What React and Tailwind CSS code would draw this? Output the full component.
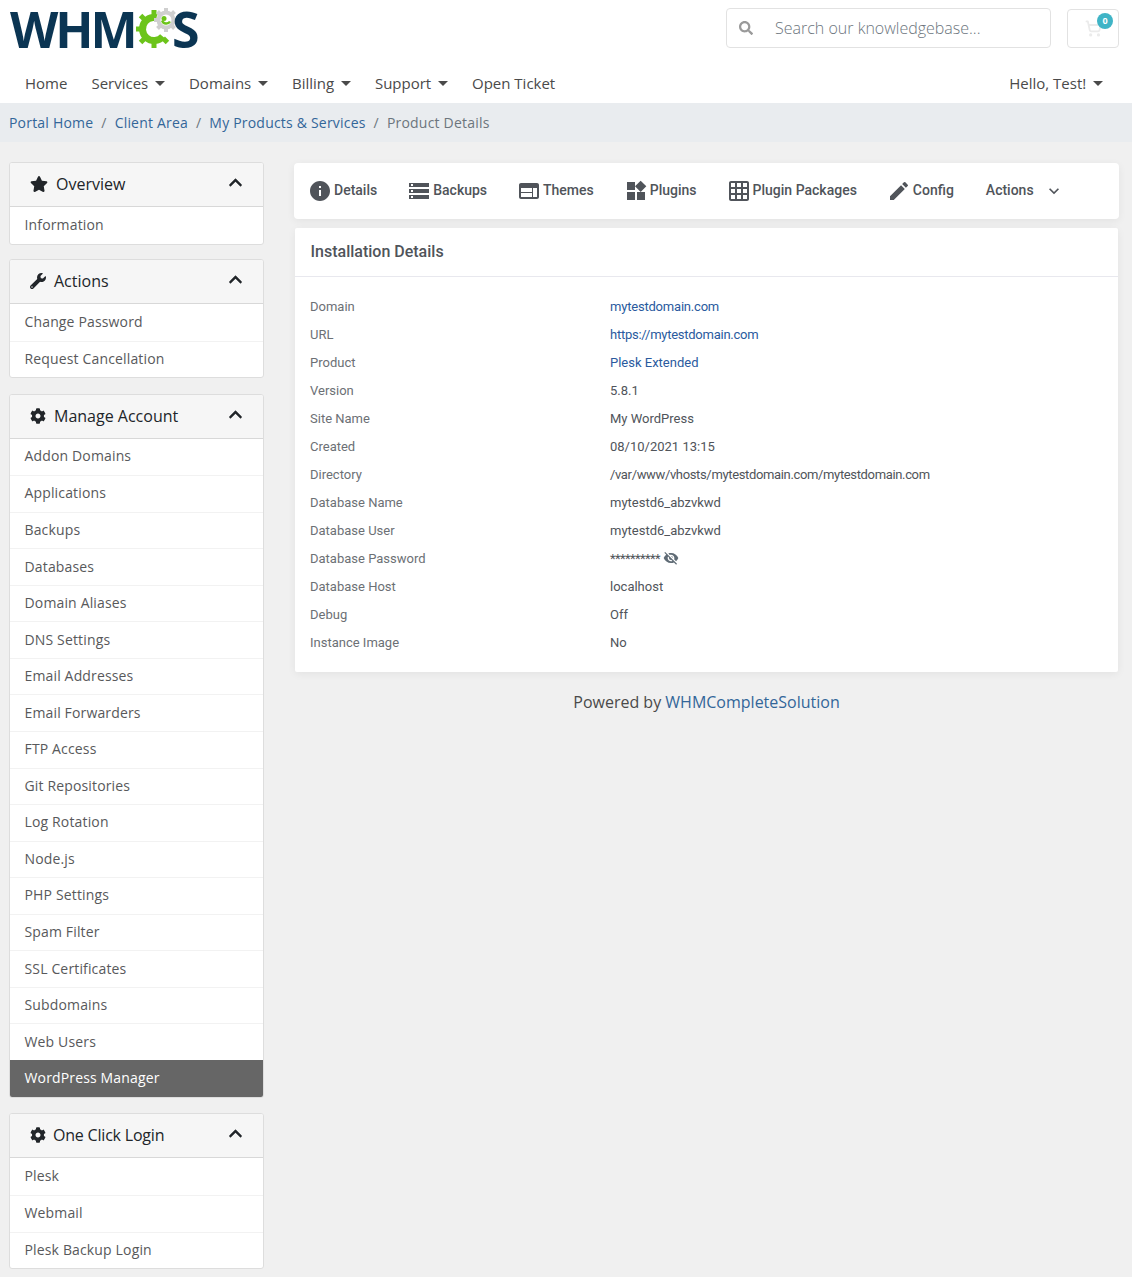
import { FaStar, FaWrench, FaCog, FaChevronUp, FaSearch } from 'react-icons/fa';
import { MdInfo, MdStorage, MdWeb, MdWidgets, MdGridOn, MdEdit, MdKeyboardArrowDown, MdVisibilityOff } from 'react-icons/md';
import { ShoppingCart } from 'lucide-react';

const navItems = [
  { label: 'Home' },
  { label: 'Services', caret: true },
  { label: 'Domains', caret: true },
  { label: 'Billing', caret: true },
  { label: 'Support', caret: true },
  { label: 'Open Ticket' },
];

const tabs = [
  { label: 'Details', icon: <MdInfo className="w-[24px] h-[24px]" /> },
  { label: 'Backups', icon: <MdStorage className="w-[24px] h-[24px]" /> },
  { label: 'Themes', icon: <MdWeb className="w-[24px] h-[24px]" /> },
  { label: 'Plugins', icon: <MdWidgets className="w-[24px] h-[24px]" /> },
  { label: 'Plugin Packages', icon: <MdGridOn className="w-[24px] h-[24px]" /> },
  { label: 'Config', icon: <MdEdit className="w-[24px] h-[24px]" /> },
];

const manageItems = [
  'Addon Domains', 'Applications', 'Backups', 'Databases', 'Domain Aliases', 'DNS Settings',
  'Email Addresses', 'Email Forwarders', 'FTP Access', 'Git Repositories', 'Log Rotation',
  'Node.js', 'PHP Settings', 'Spam Filter', 'SSL Certificates', 'Subdomains', 'Web Users',
];

const details = [
  { label: 'Domain', value: 'mytestdomain.com', link: true, tight: 'tracking-[-0.2px]' },
  { label: 'URL', value: 'https://mytestdomain.com', link: true, tight: 'tracking-[-0.25px]' },
  { label: 'Product', value: 'Plesk Extended', link: true },
  { label: 'Version', value: '5.8.1' },
  { label: 'Site Name', value: 'My WordPress' },
  { label: 'Created', value: '08/10/2021 13:15' },
  { label: 'Directory', value: '/var/www/vhosts/mytestdomain.com/mytestdomain.com', tight: 'tracking-[-0.35px]' },
  { label: 'Database Name', value: 'mytestd6_abzvkwd' },
  { label: 'Database User', value: 'mytestd6_abzvkwd' },
  { label: 'Database Password', value: '**********', tight: 'tracking-[-0.6px]' },
  { label: 'Database Host', value: 'localhost' },
  { label: 'Debug', value: 'Off' },
  { label: 'Instance Image', value: 'No' },
];

function Caret() {
  return <span className="inline-block ml-[6.75px] w-0 h-0 border-x-[5px] border-x-transparent border-t-[5px] border-t-[#4a4a4a] align-middle" />;
}

function Logo() {
  return (
    <div className="relative -mt-[4px] w-[190px] h-[51px] font-['Open_Sans',sans-serif] font-bold text-[#0b3553] text-[50px] leading-[51px] tracking-[-3px] whitespace-nowrap">
      <span className="inline-block pr-[4px]">WHM</span>
      <svg viewBox="0 0 64 44" className="absolute left-[126px] top-[4px] w-[64px] h-[44px]">
        {/* green gear, open towards the S */}
        <circle cx="18" cy="21" r="11.5" fill="none" stroke="#6cc41a" strokeWidth="7" strokeDasharray="54 18" transform="rotate(40 18 21)" />
        {[0, 45, 135, 180, 225, 270, 315].map((a) => (
          <rect key={a} x="15.5" y="2" width="5" height="6" fill="#6cc41a" transform={`rotate(${a} 18 21)`} />
        ))}
        {/* grey gear */}
        <circle cx="30" cy="12" r="10" fill="#fff" />
        <circle cx="30" cy="12" r="7.5" fill="none" stroke="#cfcfcf" strokeWidth="4" />
        {[0, 45, 90, 135, 180, 225, 270, 315].map((a) => (
          <rect key={a} x="28" y="0" width="4" height="4" fill="#cfcfcf" transform={`rotate(${a} 30 12)`} />
        ))}
        <circle cx="28" cy="10.5" r="2.5" fill="#6cc41a" />
        <path d="M25 13a5.5 5.5 0 0 0 10 1l-2-1a3.5 3.5 0 0 1-6-1z" fill="#6cc41a" />
      </svg>
      <span className="absolute left-[162px] top-0 pr-[4px]">S</span>
    </div>
  );
}

function Panel({ title, icon, items, titleGap = 'ml-[8px]', active, gap = 'mb-[15.5px]' }) {
  return (
    <div className={`${gap} bg-white border border-[#ddd] rounded-[3px] overflow-hidden font-['Open_Sans',sans-serif]`}>
      <div className="h-[44px] pb-[1px] bg-[#f6f6f6] border-b border-[#d8d8d8] flex items-center pl-[20px] pr-[20px] text-[#212529]">
        {icon}
        <span className={`${titleGap} text-[16px]`}>{title}</span>
        <FaChevronUp className="ml-auto -mt-[3px] w-[15px] h-[15px]" />
      </div>
      {items.map((item, i) => (
        <div
          key={item}
          className={`h-[36.56px] pb-[2px] flex items-center px-[14.5px] text-[14px] tracking-[0.15px] text-[#58595b] ${i ? 'border-t border-[#f2f2f2]' : ''}`}
        >
          {item}
        </div>
      ))}
      {active && (
        <div className="h-[37px] pb-[2px] flex items-center px-[14.5px] text-[14px] tracking-[0.15px] text-white bg-[#666666]">{active}</div>
      )}
    </div>
  );
}

export default function App() {
  return (
    <div className="w-[1132px] h-[1277px] overflow-hidden bg-[#f0f0f0] font-['Open_Sans',sans-serif]">
      <header className="h-[103px] bg-white">
        <div className="h-[64px] pl-[10px] pr-[13px] pt-[8px] flex items-start">
          <Logo />
          <div className="ml-auto h-[40px] w-[325px] border border-[#e2e2e2] rounded-[4px] flex items-center pl-[12px]">
            <FaSearch className="w-[14px] h-[14px] text-[#9a9a9a]" />
            <span className="ml-[22px] text-[16px] font-light text-[#6c757d]">Search our knowledgebase...</span>
          </div>
          <div className="relative ml-[16px] mt-[1px] h-[39px] w-[52px] border border-[#e2e2e2] rounded-[4px] flex items-center justify-center">
            <ShoppingCart strokeWidth={2.5} className="w-[17px] h-[17px] text-[#ebebeb]" />
            <span className="absolute right-[5px] top-[3px] w-[16px] h-[16px] rounded-full bg-[#3fb4c6] text-white text-[9px] font-bold flex items-center justify-center">0</span>
          </div>
        </div>
        <nav className="h-[39px] pl-[25px] pr-[29px] flex items-center text-[15px] text-[#4a4a4a]">
          <div className="flex gap-[24px]">
            {navItems.map((n) => (
              <span key={n.label} className="flex items-center">
                {n.label}
                {n.caret && <Caret />}
              </span>
            ))}
          </div>
          <span className="ml-auto flex items-center">Hello, Test!<Caret /></span>
        </nav>
      </header>

      <div className="h-[39px] bg-[#e9ecef] pl-[9px] flex items-center text-[14px] tracking-[0.2px] text-[#336699]">
        <span>Portal Home</span>
        <span className="mx-[8px] text-[#6c757d]">/</span>
        <span>Client Area</span>
        <span className="mx-[8px] text-[#6c757d]">/</span>
        <span>My Products &amp; Services</span>
        <span className="mx-[8px] text-[#6c757d]">/</span>
        <span className="text-[#6c757d]">Product Details</span>
      </div>

      <div className="flex pl-[9px] pr-[13px] pt-[20px] gap-[30px]">
        <aside className="w-[255px] shrink-0">
          <Panel title="Overview" gap="mb-[14.5px]" icon={<FaStar className="w-[18px] h-[18px]" />} items={['Information']} />
          <Panel title="Actions" icon={<FaWrench className="w-[16px] h-[16px]" />} items={['Change Password', 'Request Cancellation']} />
          <Panel title="Manage Account" icon={<FaCog className="w-[16px] h-[16px]" />} items={manageItems} active="WordPress Manager" />
          <Panel title="One Click Login" titleGap="ml-[7px] tracking-[-0.2px]" icon={<FaCog className="w-[16px] h-[16px]" />} items={['Plesk', 'Webmail', 'Plesk Backup Login']} />
        </aside>

        <main className="flex-1 min-w-0 font-['Roboto',sans-serif]">
          <div className="mt-[1px] h-[56px] bg-white rounded-[4px] shadow-[0_2px_8px_rgba(0,0,0,0.06)] flex items-center pl-[14px] text-[14px] font-medium text-[#50545a]">
            <div className="flex gap-[30px]">
              {tabs.map((t) => (
                <span key={t.label} className="flex items-center">
                  {t.icon}
                  <span className="ml-[2px] -mt-[2px]">{t.label}</span>
                </span>
              ))}
              <span className="ml-[2px] flex items-center">
                <span className="-mt-[2px]">Actions</span>
                <MdKeyboardArrowDown className="ml-[10px] w-[20px] h-[20px]" />
              </span>
            </div>
          </div>

          <div className="mx-[1px] mt-[9px] h-[444px] bg-white rounded-[2px] shadow-[0_2px_8px_rgba(0,0,0,0.06)]">
            <div className="h-[49px] border-b border-[#e8e8ee] pl-[15.5px] flex items-center text-[16px] font-medium text-[#50545a]">
              Installation Details
            </div>
            <div className="pt-[16px] pl-[15px] text-[13px]">
              {details.map((row) => (
                <div key={row.label} className="h-[28px] flex items-center">
                  <span className="w-[300px] text-[#6c7075]">{row.label}</span>
                  <span className={`flex items-center ${row.tight || ''} ${row.link ? 'text-[#2a5a9e]' : 'text-[#50545a]'}`}>
                    {row.value}
                    {row.label === 'Database Password' && <MdVisibilityOff className="ml-[3px] -mt-[2px] w-[16px] h-[16px] text-[#5f6b75]" />}
                  </span>
                </div>
              ))}
            </div>
          </div>

          <p className="mt-[18px] text-center font-['Open_Sans',sans-serif] text-[16px] text-[#4a4a4a]">
            Powered by <span className="text-[#336699]">WHMCompleteSolution</span>
          </p>
        </main>
      </div>
    </div>
  );
}
